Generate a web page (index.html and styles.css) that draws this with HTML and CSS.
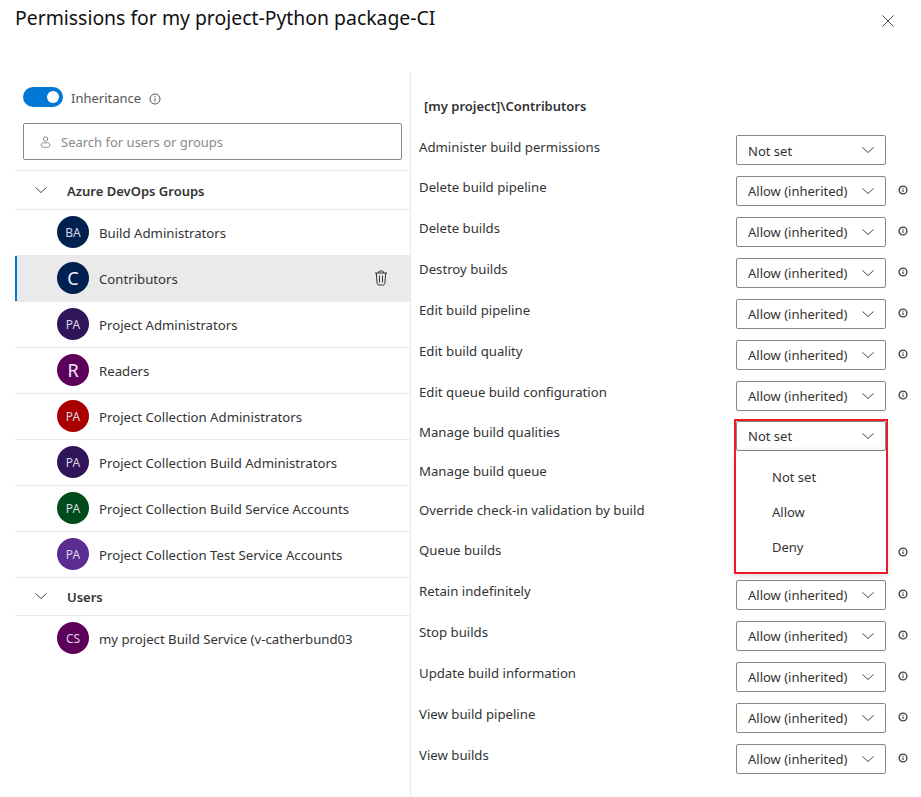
FILE: index.html
```html
<!DOCTYPE html>
<html lang="en">
<head>
<meta charset="utf-8">
<title>Permissions</title>
<link rel="stylesheet" href="styles.css">
</head>
<body>
<svg class="defs" width="0" height="0" aria-hidden="true">
  <symbol id="chev" viewBox="0 0 12 6"><path d="M.5.500L6 5.500 11.500.500" fill="none" stroke="currentColor" stroke-width="1"/></symbol>
  <symbol id="info" viewBox="0 0 12 12"><circle cx="6" cy="6" r="3.900" fill="none" stroke="currentColor" stroke-width="1.400"/><path d="M6 5.400v2.700M6 3.700v1" fill="none" stroke="currentColor" stroke-width="1.200"/></symbol>
</svg>
<header class="header">
  <h1 class="title">Permissions for my project-Python package-CI</h1>
  <button class="close" aria-label="Close"><svg width="12" height="12" viewBox="0 0 12 12"><path d="M.5.5l11 11M11.500.5l-11 11" stroke="currentColor" stroke-width="1" fill="none"/></svg></button>
</header>
<main class="main">
  <section class="left">
    <div class="inherit">
      <span class="toggle"><span class="knob"></span></span>
      <span class="inherit-label">Inheritance</span>
      <svg class="inherit-info" width="12" height="12" viewBox="0 0 12 12"><circle cx="6" cy="6" r="5" fill="none" stroke="currentColor"/><path d="M6 5.300v3.400M6 3v1.200" stroke="currentColor" fill="none"/></svg>
    </div>
    <div class="search">
      <svg class="search-icon" width="11" height="12" viewBox="0 0 12 14"><circle cx="6" cy="3.500" r="2.500" fill="none" stroke="currentColor"/><path d="M1 11c0-2 1-3 2.500-3h5C10 8 11 9 11 11c0 1.500-1.500 2.300-5 2.300S1 12.500 1 11z" fill="none" stroke="currentColor"/></svg>
      <span class="placeholder">Search for users or groups</span>
    </div>
    <div class="group"><svg class="group-chev"><use href="#chev"/></svg><span class="name">Azure DevOps Groups</span></div>
    <div class="item"><span class="avatar navy">BA</span><span class="name">Build Administrators</span></div>
    <div class="item selected"><span class="avatar navy large">C</span><span class="name">Contributors</span>
      <svg class="trash" width="14" height="16" viewBox="0 0 14 16"><path d="M1 3h12M4.500 3V2.200c0-.7.500-1.200 1.200-1.200h2.600c.7 0 1.200.5 1.200 1.200V3M2.300 3l.8 10.200c.1 1 .8 1.800 1.800 1.800h4.200c1 0 1.700-.8 1.800-1.800L11.700 3M5.500 5.500v7M8.500 5.500v7" fill="none" stroke="currentColor"/></svg></div>
    <div class="item"><span class="avatar indigo">PA</span><span class="name">Project Administrators</span></div>
    <div class="item"><span class="avatar plum large">R</span><span class="name">Readers</span></div>
    <div class="item"><span class="avatar red">PA</span><span class="name">Project Collection Administrators</span></div>
    <div class="item"><span class="avatar indigo">PA</span><span class="name">Project Collection Build Administrators</span></div>
    <div class="item"><span class="avatar green">PA</span><span class="name">Project Collection Build Service Accounts</span></div>
    <div class="item"><span class="avatar violet">PA</span><span class="name">Project Collection Test Service Accounts</span></div>
    <div class="group users"><svg class="group-chev"><use href="#chev"/></svg><span class="name">Users</span></div>
    <div class="item"><span class="avatar plum">CS</span><span class="name">my project Build Service (v-catherbund03</span></div>
  </section>
  <section class="right">
    <h2 class="subject">[my project]\Contributors</h2>
    <div class="row first"><span class="label">Administer build permissions</span><div class="select"><span class="value">Not set</span><svg class="chev"><use href="#chev"/></svg></div></div>
    <div class="row"><span class="label">Delete build pipeline</span><div class="select"><span>Allow (inherited)</span><svg class="chev"><use href="#chev"/></svg></div><svg class="info"><use href="#info"/></svg></div>
    <div class="row"><span class="label">Delete builds</span><div class="select"><span>Allow (inherited)</span><svg class="chev"><use href="#chev"/></svg></div><svg class="info"><use href="#info"/></svg></div>
    <div class="row"><span class="label">Destroy builds</span><div class="select"><span>Allow (inherited)</span><svg class="chev"><use href="#chev"/></svg></div><svg class="info"><use href="#info"/></svg></div>
    <div class="row"><span class="label">Edit build pipeline</span><div class="select"><span>Allow (inherited)</span><svg class="chev"><use href="#chev"/></svg></div><svg class="info"><use href="#info"/></svg></div>
    <div class="row"><span class="label">Edit build quality</span><div class="select"><span>Allow (inherited)</span><svg class="chev"><use href="#chev"/></svg></div><svg class="info"><use href="#info"/></svg></div>
    <div class="row h40"><span class="label">Edit queue build configuration</span><div class="select"><span>Allow (inherited)</span><svg class="chev"><use href="#chev"/></svg></div><svg class="info"><use href="#info"/></svg></div>
    <div class="row h39"><span class="label">Manage build qualities</span>
      <div class="select open"><span>Not set</span><svg class="chev"><use href="#chev"/></svg>
        <div class="menu"><div class="option">Not set</div><div class="option">Allow</div><div class="option">Deny</div></div>
        <div class="highlight"></div>
      </div>
    </div>
    <div class="row h39"><span class="label">Manage build queue</span></div>
    <div class="row h39"><span class="label">Override check-in validation by build</span></div>
    <div class="row h42 first"><span class="label">Queue builds</span><div class="select-slot"></div><svg class="info"><use href="#info"/></svg></div>
    <div class="row"><span class="label">Retain indefinitely</span><div class="select"><span>Allow (inherited)</span><svg class="chev"><use href="#chev"/></svg></div><svg class="info"><use href="#info"/></svg></div>
    <div class="row"><span class="label">Stop builds</span><div class="select"><span>Allow (inherited)</span><svg class="chev"><use href="#chev"/></svg></div><svg class="info"><use href="#info"/></svg></div>
    <div class="row"><span class="label">Update build information</span><div class="select"><span>Allow (inherited)</span><svg class="chev"><use href="#chev"/></svg></div><svg class="info"><use href="#info"/></svg></div>
    <div class="row"><span class="label">View build pipeline</span><div class="select"><span>Allow (inherited)</span><svg class="chev"><use href="#chev"/></svg></div><svg class="info"><use href="#info"/></svg></div>
    <div class="row"><span class="label">View builds</span><div class="select"><span>Allow (inherited)</span><svg class="chev"><use href="#chev"/></svg></div><svg class="info"><use href="#info"/></svg></div>
  </section>
</main>
</body>
</html>
```
FILE: styles.css
```css
* { box-sizing: border-box; }
html, body { margin: 0; height: 797px; overflow: hidden; }
body { background: #fff; color: #333; font-family: "Noto Sans", "Open Sans", sans-serif; font-size: 13.2px; }
.defs { position: absolute; }

.header { height: 72px; display: flex; justify-content: space-between; padding-left: 15px; }
.title { margin: 0; font-size: 19.4px; font-weight: 400; line-height: 36px; color: #111; }
.close { border: 0; background: none; padding: 0; width: 12px; height: 12px; margin: 15px 27px 0 0; color: #444; display: flex; }

.main { display: flex; height: 725px; }
.left { width: 396px; margin-left: 15px; border-right: 1px solid #eaeaea; }
.inherit { display: flex; align-items: center; height: 20px; margin: 15px 0 16px 8px; }
.toggle { width: 40px; height: 20px; border-radius: 10px; background: #0078d4; display: flex; justify-content: flex-end; align-items: center; padding-right: 4px; }
.knob { width: 12px; height: 12px; border-radius: 50%; background: #fff; }
.inherit-label { margin-left: 8px; padding-top: 2px; color: #555; font-size: 13px; }
.inherit-info { margin: 3px 0 0 8px; color: #555; }
.search { height: 37px; margin: 0 8px; border: 1px solid #8a8886; border-radius: 2px; display: flex; align-items: center; padding-left: 16px; color: #8a8a8a; font-size: 13px; }
.search-icon { color: #777; }
.placeholder { margin-left: 10px; }

.name { padding-top: 2px; }
.group { height: 39px; margin-top: 10px; padding-bottom: 1px; border-top: 1px solid #eaeaea; display: flex; align-items: center; font-weight: 600; font-size: 13px; }
.group.users { margin-top: 0; height: 38px; }
.group-chev { width: 12px; height: 6px; margin: 0 20px 0 20px; color: #444; }

.item { height: 46px; display: flex; align-items: center; padding: 0 0 1px 42px; border-top: 1px solid #eaeaea; }
.item.selected { background: #eaeaea; box-shadow: inset 2px 0 0 #0078d4; }
.avatar { width: 32px; height: 32px; border-radius: 50%; flex: none; display: flex; align-items: center; justify-content: center; margin-right: 10px; color: #d8d8e4; font-size: 12px; }
.avatar.large { font-size: 18px; color: #eef; }
.navy { background: #002050; }
.indigo { background: #32145a; }
.plum { background: #5c005c; }
.red { background: #a80000; }
.green { background: #004b1c; }
.violet { background: #5c2d91; }
.trash { margin-left: auto; margin-right: 22px; color: #333; }

.right { flex: 1; padding-left: 8px; }
.subject { margin: 24px 0 19px 5px; font-size: 13px; font-weight: 600; line-height: 20px; color: #333; }
.row { height: 41px; display: flex; align-items: flex-start; }
.row.h40 { height: 40px; }
.row.h39 { height: 39px; }
.row.h42 { height: 42px; }
.label { width: 317px; line-height: 22px; flex: none; }
.row.first .label { line-height: 24px; }
.select { position: relative; width: 150px; height: 30px; flex: none; border: 1px solid #8a8886; border-radius: 2px; display: flex; align-items: center; justify-content: space-between; padding: 0 11px; background: #fff; font-size: 13px; }
.select-slot { width: 150px; height: 30px; flex: none; }
.select.open { z-index: 1; }
.value { padding-top: 2px; }
.chev { width: 12px; height: 6px; color: #444; }
.info { width: 12px; height: 12px; margin: 8px 0 0 11px; color: #444; }

.menu { position: absolute; left: -1px; top: 29px; width: 150px; height: 122px; padding-top: 9px; background: #fff; box-shadow: 0 2px 8px rgba(0, 0, 0, .18); }
.option { height: 35px; line-height: 35px; padding-left: 36px; }
.highlight { position: absolute; left: -3px; top: -3px; width: 154px; height: 155px; border: 2px solid #ed1c24; pointer-events: none; }
```
